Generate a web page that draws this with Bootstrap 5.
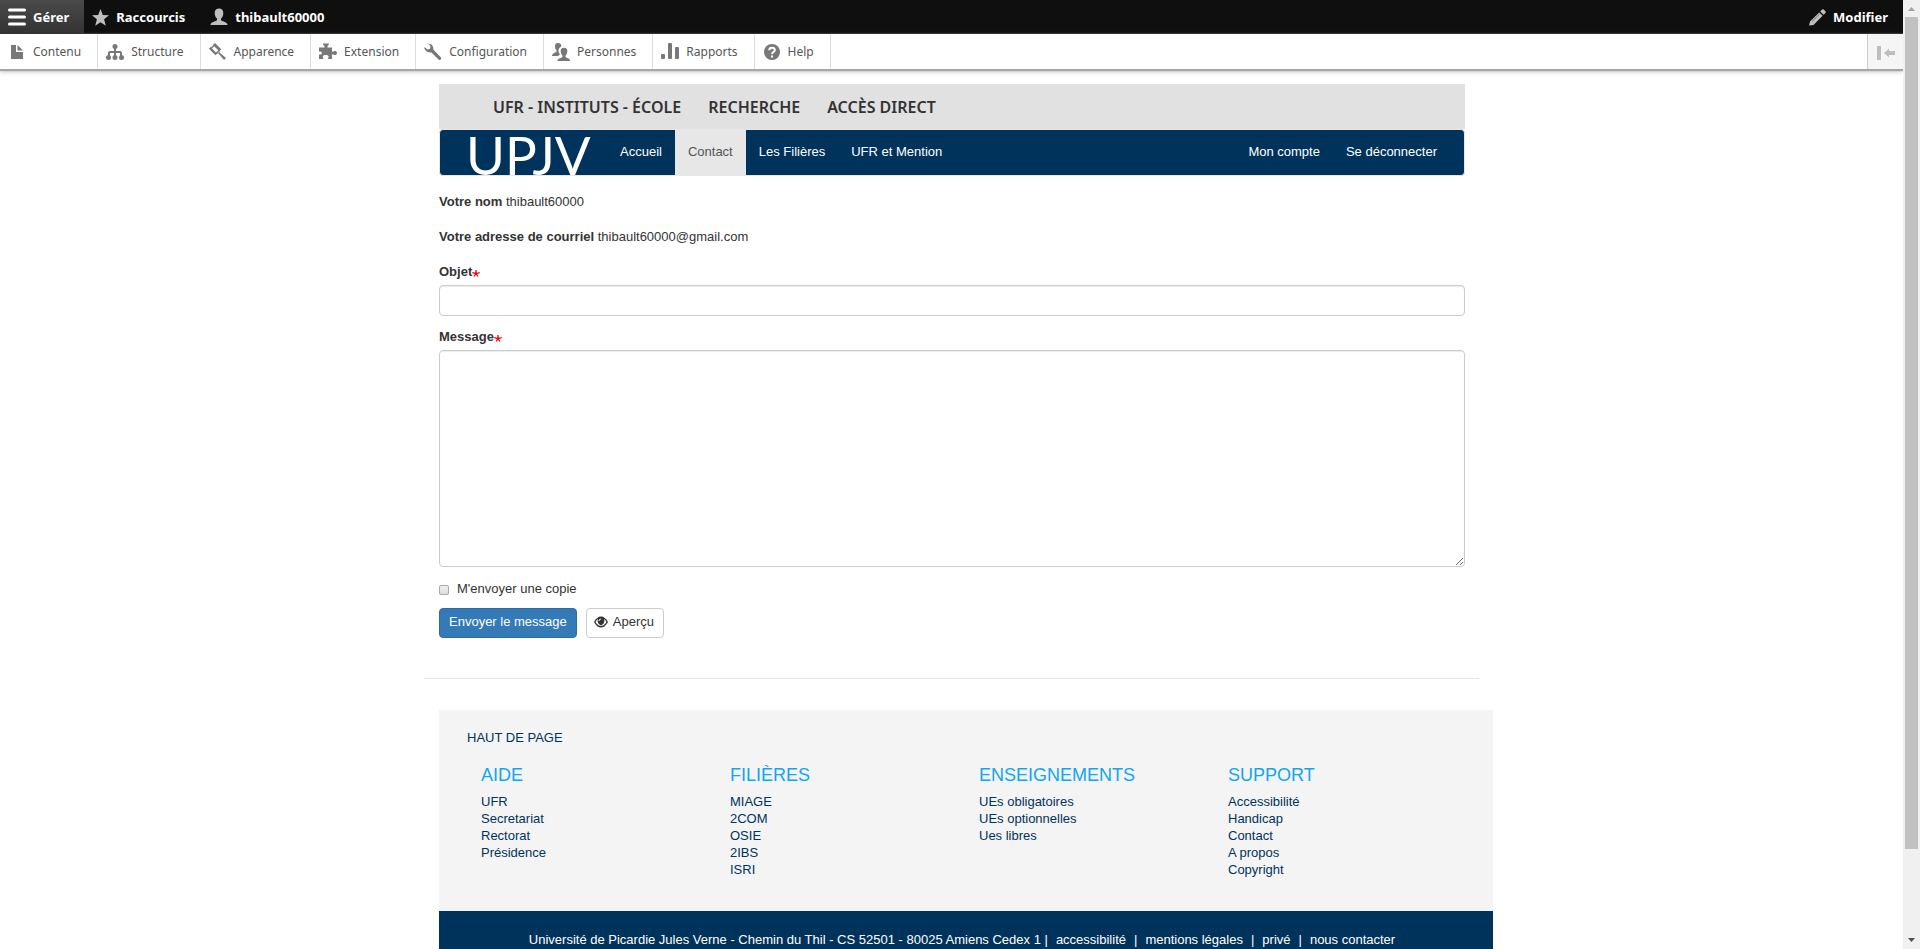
<!DOCTYPE html>
<html lang="fr">
<head>
<meta charset="utf-8">
<meta name="viewport" content="width=device-width, initial-scale=1">
<title>Contact | UPJV</title>
<link href="https://cdn.jsdelivr.net/npm/bootstrap@5.3.0/dist/css/bootstrap.min.css" rel="stylesheet">
<style>
  body { font: 13px/19px "Liberation Sans", Arial, sans-serif; color: #333; background: #fff; }
  a { color: inherit; text-decoration: none; }
  .viewport-pane { min-width: 0; }
  .admin-font { font-family: "Noto Sans", sans-serif; }
  .admin-bar { height: 34px; background: #0f0f0f; color: #fff; font-weight: 700; }
  .admin-bar a { gap: 7px; padding: 0 15px 0 8px; height: 34px; }
  .admin-bar .current { background: linear-gradient(#4a4a4a, #333); }
  .admin-bar .account { padding-left: 10px; }
  .admin-tray { height: 35px; color: #565656; font-size: 12px; box-shadow: 0 1px 1px 1px #a6a6a6, 0 3px 5px #ccc; }
  .admin-tray a { height: 35px; padding: 0 16px 0 8px; gap: 7px; border-right: 1px solid #ddd; }
  .tray-toggle { width: 36px; border: 0; border-left: 1px solid #ccc; background: #f5f5f5; padding: 0; }
  .site { max-width: 1055px; padding: 15px 14px 0 15px; }
  .top-links { height: 45px; background: #e1e1e1; padding: 0 54px; gap: 27px; font: 600 16px/20px "Noto Sans", sans-serif; color: #333; }
  .main-nav { height: 47px; background: #00335b; border: 1px solid #e7e7e7; border-radius: 4px; color: #fff; padding-right: 14px; }
  .main-nav .nav-item a { display: flex; padding: 0 13px 2px; height: 45px; align-items: center; }
  .main-nav .current { background: #e7e7e7; color: #555; }
  .brand-mark { font: 400 53px/49px Lato, sans-serif; width: 141px; height: 45px; margin-left: 26px; white-space: nowrap; }
  .contact-form { padding-top: 16px; }
  .contact-form label { font-weight: 700; }
  .info-row { margin-bottom: 16px; }
  .field-block { margin-bottom: 11px; }
  .contact-form .field-label { display: flex; align-items: center; margin-bottom: 4px; }
  .form-control { border-color: #ccc; border-radius: 4px; box-shadow: inset 0 1px 1px #ececec; font-size: 13px; }
  .subject-box { height: 31px; }
  .message-box { height: 217px; }
  .copy-row { gap: 8px; margin: 12px 0 10px; }
  .contact-form .copy-row label { font-weight: 400; }
  .copy-box { appearance: none; width: 10px; height: 10px; margin: 3px 0 0; border: 1px solid #aaa; border-radius: 2px; background: linear-gradient(#eee, #ddd); }
  .copy-box:checked { background: #337ab7; }
  .button-row { gap: 9px; }
  .form-btn { height: 30px; padding: 0 9px 3px; font-size: 13px; border-radius: 4px; }
  .send-btn { background: #337ab7; border-color: #2e6da4; color: #fff; }
  .preview-btn { background: #fff; border-color: #ccc; color: #333; padding-left: 7px; gap: 5px; }
  .divider { height: 1px; background: #e5e5e5; margin: 40px -14px 31px -15px; }
  .site-footer { margin: 0 -28px 0 0; background: #f4f4f4; color: #00335b; }
  .footer-body { padding: 18px 28px 33px; }
  .footer-grid { padding-left: 14px; margin-top: 18px; margin-right: -12px; }
  .footer-grid h2 { font-size: 18px; line-height: 20px; color: #11a6f0; margin: 0 0 8px; font-weight: 400; }
  .footer-grid li { line-height: 17px; }
  .legal { background: #00335b; color: #fff; padding: 19px 0; }
  .legal a { padding: 0 8px; }
  .scroll-rail { width: 17px; background: #f0f0f0; }
  .scroll-rail svg { flex: none; }
  .scroll-grip { width: 13px; flex: 832 0 0; background: #c1c1c1; }
  .scroll-rest { flex: 83 0 0; }
</style>
</head>
<body>
<div class="d-flex vh-100 overflow-hidden">
  <div class="viewport-pane flex-grow-1 overflow-hidden">
    <header class="admin-font">
      <nav class="admin-bar d-flex" aria-label="Administration">
        <a href="#" class="current d-flex align-items-center">
          <svg width="18" height="18" viewBox="0 0 18 18" stroke="#fff" stroke-width="3" stroke-linecap="round"><path d="M1.5 2h15M1.5 9h15M1.5 16h15"/></svg>Gérer</a>
        <a href="#" class="d-flex align-items-center">
          <svg width="17" height="17" viewBox="0 0 17 17" fill="#bebebe"><path d="M8.500 0l2.300 5.900 6.200.4-4.900 4 1.700 6.400-5.300-3.500-5.300 3.500 1.700-6.400-4.900-4 6.200-.4z"/></svg>Raccourcis</a>
        <a href="#" class="account d-flex align-items-center">
          <svg width="18" height="18" viewBox="0 0 18 18" fill="#bebebe"><path d="M9 .5C6.300.5 4.500 2.400 4.700 5.200c.1 2.600 1 4.300 2.300 5.300v1.700c-.6 1-5.800 1.500-6.500 4.200V17h17v-.6c-.7-2.700-5.900-3.200-6.500-4.200v-1.700c1.300-1 2.200-2.700 2.300-5.300C13.500 2.400 11.700.5 9 .5z"/></svg>thibault60000</a>
        <a href="#" class="d-flex align-items-center ms-auto">
          <svg width="17" height="17" viewBox="0 0 17 17" fill="#bebebe"><path d="M0 16.500l1-4L10.200 3.400l3.400 3.400L4.500 16zM11.200 2.400l1.900-1.800q.8-.7 1.600 0l1.700 1.700q.8.800 0 1.700l-1.800 1.800z"/><path d="M3 12.500l7.500-7.300" stroke="#777"/></svg>Modifier</a>
      </nav>
      <nav class="admin-tray d-flex" aria-label="Gérer">
        <a href="#" class="d-flex align-items-center">
          <svg width="18" height="16" viewBox="0 0 18 16" fill="#787878"><path d="M3 1h5v7h7v7H3zM9.500 1L15 6.500H9.500z"/></svg>Contenu</a>
        <a href="#" class="d-flex align-items-center">
          <svg width="18" height="16" viewBox="0 0 18 16" fill="#787878"><circle cx="9" cy="2.500" r="2.500"/><path d="M8 4h2v3h4q2 0 2 2v3h-2V9h-4v3H8V9H4v3H2V9q0-2 2-2h4z"/><circle cx="2.500" cy="13.500" r="2.500"/><circle cx="9" cy="13.500" r="2.500"/><circle cx="15.500" cy="13.500" r="2.500"/></svg>Structure</a>
        <a href="#" class="d-flex align-items-center">
          <svg width="18" height="17" viewBox="0 0 18 17"><path d="M6 1.500l5 5-4.500 4.500-5-5z" fill="#fff" stroke="#787878" stroke-width="1.500"/><path d="M6 0l6 6-2 2-6-6zM0 5.500L1.500 4 8 10.500 6.500 12zM11.500 7.500l-1 2 6.500 5.500-2 2-5.500-6.500-2 1z" fill="#787878"/></svg>Apparence</a>
        <a href="#" class="d-flex align-items-center">
          <svg width="18" height="17" viewBox="0 0 18 17" fill="#787878"><path d="M0 4.500h5.500V3C4.300 2.600 3.800.5 4 .5h6c.2 0-.3 2.100-1.500 2.500v1.500H13v4.200h1.200c.3-1 3.800-1.200 3.800 1.300s-3.500 2.300-3.800 1.300H13V16H9c-.3-1 1-1.700.6-2.800-.6-1.700-5.200-1.700-5.800 0C3.400 14.300 4.700 15 4.400 16H0v-4.500h1.500q1.500-.5 1.500-1.500T1.500 8.500H0z"/></svg>Extension</a>
        <a href="#" class="d-flex align-items-center">
          <svg width="18" height="18" viewBox="0 0 18 18" fill="#787878"><path d="M4 .5l3.500 1Q10 4 9.300 6.500l7.700 8q.7 2.500-2 2.500L7.500 9.500Q3 10 .5 6V4l3 2.500 2.500-.7.500-2.500z"/></svg>Configuration</a>
        <a href="#" class="d-flex align-items-center">
          <svg width="18" height="18" viewBox="0 0 18 18" fill="#787878"><path d="M6 0C3.800 0 2.700 1.500 3 3.700c.2 2 .7 2.900 1.600 3.700v1.200C4 10 0 10 0 13h6l2-1.500C5.500 8 6.300 5.200 9.200 3.800 9.500 1.200 8.200 0 6 0z"/><path d="M12 4.800c-2.400 0-3.600 1.500-3.300 3.700.2 2 .7 3 1.700 3.900v1.500c-.5 1-4.400 1-4.900 3.600v.5H18v-.5c-.3-2.600-3.900-2.600-4.400-3.600v-1.500c1-.9 1.500-1.900 1.700-3.900.3-2.200-.9-3.700-3.300-3.700z"/></svg>Personnes</a>
        <a href="#" class="d-flex align-items-center">
          <svg width="18" height="17" viewBox="0 0 18 17" fill="#787878"><rect y="11" width="4" height="5" rx="1"/><rect x="7" width="4" height="16" rx="1"/><rect x="14" y="4" width="4" height="12" rx="1"/></svg>Rapports</a>
        <a href="#" class="d-flex align-items-center">
          <svg width="18" height="18" viewBox="0 0 18 18"><circle cx="9" cy="9" r="8" fill="#787878"/><path d="M6.200 7.200Q6.300 4.700 9 4.700T11.800 7q0 1.300-1.500 2.100Q9 9.800 9 11.200M9 12.500v2" fill="none" stroke="#fff" stroke-width="2"/></svg>Help</a>
        <button class="tray-toggle ms-auto" type="button" aria-label="Orientation verticale">
          <svg width="18" height="14" viewBox="0 0 18 14" fill="#bebebe"><path d="M0 0h4v14H0zM7 7l5-4.500V5h6v4h-6v2.500z"/></svg></button>
      </nav>
    </header>

    <div class="site container-fluid mx-auto">
      <nav class="top-links d-flex align-items-center" aria-label="Accès rapides">
        <a href="#">UFR - INSTITUTS - ÉCOLE</a><a href="#">RECHERCHE</a><a href="#">ACCÈS DIRECT</a>
      </nav>
      <nav class="main-nav d-flex" aria-label="Navigation principale">
        <a class="brand-mark" href="#">UPJV</a>
        <ul class="nav">
          <li class="nav-item"><a href="#">Accueil</a></li>
          <li class="nav-item"><a href="#" class="current">Contact</a></li>
          <li class="nav-item"><a href="#">Les Filières</a></li>
          <li class="nav-item"><a href="#">UFR et Mention</a></li>
        </ul>
        <ul class="nav ms-auto">
          <li class="nav-item"><a href="#">Mon compte</a></li>
          <li class="nav-item"><a href="#">Se déconnecter</a></li>
        </ul>
      </nav>

      <main>
        <form class="contact-form">
          <div class="info-row"><strong>Votre nom</strong> thibault60000</div>
          <div class="info-row"><strong>Votre adresse de courriel</strong> thibault60000@gmail.com</div>
          <div class="field-block">
            <label for="subject" class="field-label">Objet<svg class="mt-1" width="8" height="7" viewBox="0 0 8 7" stroke="#e00" stroke-width="1.300"><path d="M4 0v3.500M.3 2.700l3.700 1 3.700-1M2 6.500l2-3 2 3" fill="none"/></svg></label>
            <input id="subject" type="text" class="form-control subject-box">
          </div>
          <div>
            <label for="message" class="field-label">Message<svg class="mt-1" width="8" height="7" viewBox="0 0 8 7" stroke="#e00" stroke-width="1.300"><path d="M4 0v3.500M.3 2.700l3.700 1 3.700-1M2 6.500l2-3 2 3" fill="none"/></svg></label>
            <textarea id="message" class="form-control message-box"></textarea>
          </div>
          <div class="copy-row d-flex align-items-center">
            <input id="copy" type="checkbox" class="copy-box"><label for="copy">M'envoyer une copie</label>
          </div>
          <div class="button-row d-flex">
            <button type="submit" class="btn form-btn send-btn">Envoyer le message</button>
            <button type="button" class="btn form-btn preview-btn d-flex align-items-center">
              <svg width="14" height="12" viewBox="0 0 14 12"><path d="M0 6Q3 .5 7 .5T14 6Q11 11.500 7 11.500T0 6z" fill="#333"/><path d="M1.500 6Q2.500 4 4 3 2.500 7.500 7 9.500 11.500 7.500 10 3q1.500 1 2.500 3Q10 10 7 10T1.500 6z" fill="#fff"/><path d="M5 5q0-2 2-2" stroke="#fff" fill="none"/></svg>Aperçu</button>
          </div>
        </form>
      </main>
      <div class="divider" role="separator"></div>

      <footer class="site-footer">
        <div class="footer-body">
          <a href="#">HAUT DE PAGE</a>
          <div class="footer-grid row g-0">
            <div class="col-3"><h2>AIDE</h2><ul class="list-unstyled mb-0"><li><a href="#">UFR</a></li><li><a href="#">Secretariat</a></li><li><a href="#">Rectorat</a></li><li><a href="#">Présidence</a></li></ul></div>
            <div class="col-3"><h2>FILIÈRES</h2><ul class="list-unstyled mb-0"><li><a href="#">MIAGE</a></li><li><a href="#">2COM</a></li><li><a href="#">OSIE</a></li><li><a href="#">2IBS</a></li><li><a href="#">ISRI</a></li></ul></div>
            <div class="col-3"><h2>ENSEIGNEMENTS</h2><ul class="list-unstyled mb-0"><li><a href="#">UEs obligatoires</a></li><li><a href="#">UEs optionnelles</a></li><li><a href="#">Ues libres</a></li></ul></div>
            <div class="col-3"><h2>SUPPORT</h2><ul class="list-unstyled mb-0"><li><a href="#">Accessibilité</a></li><li><a href="#">Handicap</a></li><li><a href="#">Contact</a></li><li><a href="#">A propos</a></li><li><a href="#">Copyright</a></li></ul></div>
          </div>
        </div>
        <div class="legal d-flex justify-content-center">
          <span>Université de Picardie Jules Verne - Chemin du Thil - CS 52501 - 80025 Amiens Cedex 1 |</span><a href="#">accessibilité</a>|<a href="#">mentions légales</a>|<a href="#">privé</a>|<a href="#">nous contacter</a>
        </div>
      </footer>
    </div>
  </div>
  <div class="scroll-rail d-flex flex-column align-items-center flex-shrink-0" aria-hidden="true">
    <svg width="17" height="17" viewBox="0 0 17 17"><path d="M5 11l3.500-4 3.500 4z" fill="#a3a3a3"/></svg>
    <div class="scroll-grip"></div>
    <div class="scroll-rest"></div>
    <svg width="17" height="17" viewBox="0 0 17 17"><path d="M5 6l3.500 4L12 6z" fill="#505050"/></svg>
  </div>
</div>
<script src="https://cdn.jsdelivr.net/npm/bootstrap@5.3.0/dist/js/bootstrap.bundle.min.js"></script>
</body>
</html>
